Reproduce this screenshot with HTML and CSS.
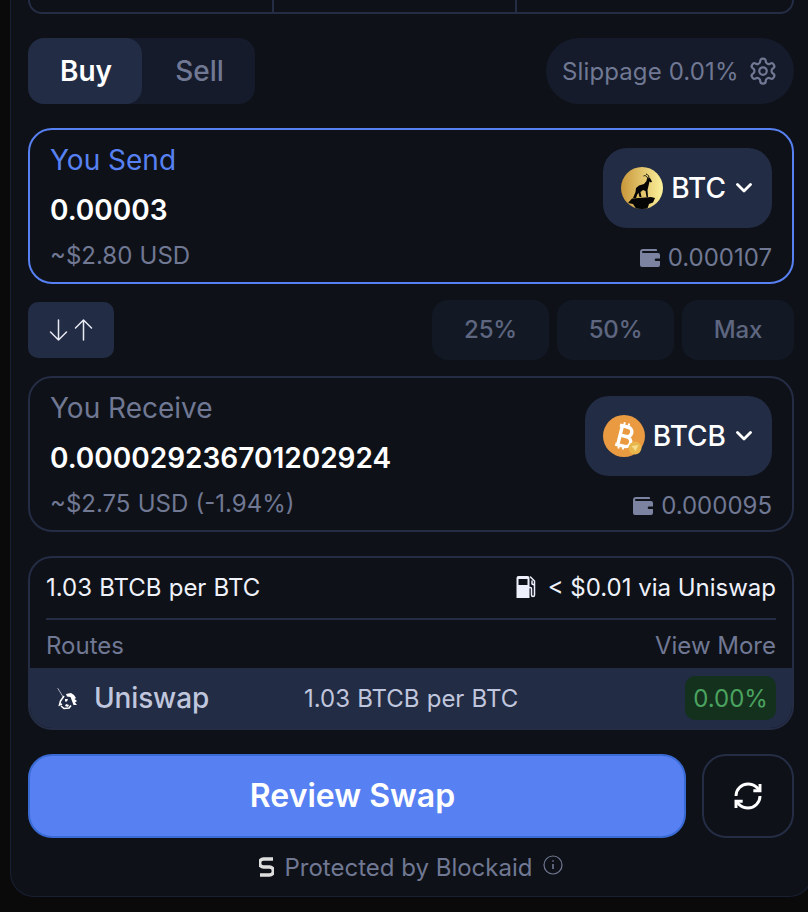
FILE: index.html
```html
<!DOCTYPE html>
<html lang="en">
<head>
    <meta charset="UTF-8">
    <meta name="viewport" content="width=device-width, initial-scale=1.0">
    <title>Swap</title>
    <link rel="stylesheet" href="styles.css">
</head>
<body>
    <div class="panel">
        <!-- stats card, scrolled mostly out of view -->
        <div class="stats">
            <div class="stat"></div>
            <div class="stat"></div>
            <div class="stat"></div>
        </div>

        <div class="top-row">
            <div class="tabs">
                <div class="tab active">Buy</div>
                <div class="tab">Sell</div>
            </div>
            <div class="slippage">
                <span>Slippage 0.01%</span>
                <svg class="gear" viewBox="0 0 24 24" fill="none" stroke="currentColor" stroke-width="1.800" stroke-linecap="round" stroke-linejoin="round">
                    <path d="M12.22 2h-.44a2 2 0 0 0-2 2v.18a2 2 0 0 1-1 1.73l-.43.25a2 2 0 0 1-2 0l-.15-.08a2 2 0 0 0-2.73.73l-.22.38a2 2 0 0 0 .73 2.73l.15.1a2 2 0 0 1 1 1.72v.51a2 2 0 0 1-1 1.74l-.15.09a2 2 0 0 0-.73 2.73l.22.38a2 2 0 0 0 2.73.73l.15-.08a2 2 0 0 1 2 0l.43.25a2 2 0 0 1 1 1.73V20a2 2 0 0 0 2 2h.44a2 2 0 0 0 2-2v-.18a2 2 0 0 1 1-1.73l.43-.25a2 2 0 0 1 2 0l.15.08a2 2 0 0 0 2.73-.73l.22-.39a2 2 0 0 0-.73-2.73l-.15-.08a2 2 0 0 1-1-1.74v-.5a2 2 0 0 1 1-1.74l.15-.09a2 2 0 0 0 .73-2.73l-.22-.38a2 2 0 0 0-2.73-.73l-.15.08a2 2 0 0 1-2 0l-.43-.25a2 2 0 0 1-1-1.73V4a2 2 0 0 0-2-2z"/>
                    <circle cx="12" cy="12" r="3"/>
                </svg>
            </div>
        </div>

        <div class="token-card focused">
            <div class="token-left">
                <div class="token-label">You Send</div>
                <div class="token-amount">0.00003</div>
                <div class="token-usd">~$2.80 USD</div>
            </div>
            <div class="token-right">
                <div class="picker">
                    <svg class="coin" viewBox="0 0 42 42">
                        <defs>
                            <linearGradient id="gold" x1="0" y1="0" x2="1" y2="0">
                                <stop offset="0" stop-color="#c9963a"/>
                                <stop offset="1" stop-color="#fbf29c"/>
                            </linearGradient>
                            <clipPath id="round"><circle cx="21" cy="21" r="21"/></clipPath>
                        </defs>
                        <circle cx="21" cy="21" r="21" fill="url(#gold)"/>
                        <g clip-path="url(#round)" fill="#050505">
                            <path d="M12 31L14.500 25L15 21L18 18.500L23 17L25.500 14L26 11.500L29 11L31 14.500L30 15.500L28.500 14.500L27.500 19L26.500 23L27 30L25.500 30L24.500 24L22 23L19.500 25L20.500 30L18.500 30L17.500 26L16.500 27L15 31Z"/>
                            <path d="M7 36L11 31.500L30 30L34 31L32 35.500L28 37L26 43L16 43L12 37Z"/>
                            <path d="M27 12C26 9 24 8 22.500 9M28 11.500C28 9 27 7.500 25 7" fill="none" stroke="#050505"/>
                        </g>
                    </svg>
                    <span class="picker-name">BTC</span>
                    <svg class="chevron" viewBox="0 0 16 16" fill="none" stroke="currentColor" stroke-width="2.800" stroke-linecap="round" stroke-linejoin="round"><path d="M1.500 4.500L8 11l6.500-6.500"/></svg>
                </div>
                <div class="balance">
                    <svg class="wallet" viewBox="0 0 20 18"><path d="M3 0h13a1 1 0 0 1 1 1v1H3a1 1 0 0 0 0 2h15a2 2 0 0 1 2 2v10a2 2 0 0 1-2 2H2a2 2 0 0 1-2-2V3a3 3 0 0 1 3-3zm13 9.500a1.300 1.300 0 1 0 0 2.600h4V9.500z"/></svg>
                    <span>0.000107</span>
                </div>
            </div>
        </div>

        <div class="mid-row">
            <div class="flip">
                <svg class="flip-icon" viewBox="0 0 44 24" fill="none" stroke="currentColor" stroke-width="1.500" stroke-linecap="round" stroke-linejoin="round">
                    <path d="M9.500 2v20M1.500 14l8 8 8-8"/>
                    <path d="M34.500 22V2M26.500 10l8-8 8 8"/>
                </svg>
            </div>
            <div class="amounts">
                <div class="amount amount-pct">25%</div>
                <div class="amount amount-pct">50%</div>
                <div class="amount amount-max">Max</div>
            </div>
        </div>

        <div class="token-card">
            <div class="token-left">
                <div class="token-label muted">You Receive</div>
                <div class="token-amount">0.000029236701202924</div>
                <div class="token-usd">~$2.75 USD (-1.94%)</div>
            </div>
            <div class="token-right">
                <div class="picker">
                    <svg class="coin" viewBox="0 0 42 42">
                        <circle cx="21" cy="21" r="21" fill="#ea9a40"/>
                        <g transform="rotate(14 21 21)" fill="none" stroke="#fff">
                            <path stroke-width="3.400" d="M14.500 11.500H23a4.500 4.500 0 0 1 0 9.500H16.500M16.500 21H24a5 5 0 0 1 0 10H14.500M17 11.500V31"/>
                            <path stroke-width="2" d="M18.500 7.500V11M23 7.500V11M18.500 31V34.500M23 31V34.500"/>
                        </g>
                        <circle cx="32" cy="33" r="6.500" fill="#e9b64c"/>
                        <path d="M28.500 31l7-1-3 6z" fill="#f5dd8c"/>
                    </svg>
                    <span class="picker-name">BTCB</span>
                    <svg class="chevron" viewBox="0 0 16 16" fill="none" stroke="currentColor" stroke-width="2.800" stroke-linecap="round" stroke-linejoin="round"><path d="M1.500 4.500L8 11l6.500-6.500"/></svg>
                </div>
                <div class="balance">
                    <svg class="wallet" viewBox="0 0 20 18"><path d="M3 0h13a1 1 0 0 1 1 1v1H3a1 1 0 0 0 0 2h15a2 2 0 0 1 2 2v10a2 2 0 0 1-2 2H2a2 2 0 0 1-2-2V3a3 3 0 0 1 3-3zm13 9.500a1.300 1.300 0 1 0 0 2.600h4V9.500z"/></svg>
                    <span>0.000095</span>
                </div>
            </div>
        </div>

        <div class="quote">
            <div class="quote-head">
                <div class="quote-row">
                    <span class="rate-text">1.03 BTCB per BTC</span>
                    <span class="gas">
                        <svg class="gas-icon" viewBox="0 0 20 22">
                            <path fill="#eef0fb" fill-rule="evenodd" d="M2 0h9a2 2 0 0 1 2 2v20H0V2a2 2 0 0 1 2-2zm0 3v6h9V3z"/>
                            <path fill="none" stroke="#eef0fb" stroke-width="1.500" stroke-linecap="round" stroke-linejoin="round" d="M14 1l4 4v14a1.500 1.500 0 0 1-3 0v-6a1.500 1.500 0 0 0-2-1.500M15.500 5v3l2.500 1"/>
                        </svg>
                        <span>&lt; $0.01 via Uniswap</span>
                    </span>
                </div>
                <div class="routes-row">
                    <span>Routes</span>
                    <span>View More</span>
                </div>
            </div>
            <div class="route">
                <div class="route-name">
                    <svg class="uni" viewBox="0 0 23 27">
                        <path d="M1.700 3.200L7.300 12.200" stroke="#cfd3e3" stroke-width="0.800" fill="none"/>
                        <path fill="#fff" d="M10 9L15 8L18 10L20 13L18.500 14L21 16L19 17.500L21 20L17.500 20L16 16L14.500 12L11 11.500Z"/>
                        <path fill="none" stroke="#fff" stroke-width="1.600" d="M8 11L4.500 16L3.500 20L6 19M5 21L8 23.500L13 23L15 20.500"/>
                        <path fill="#fff" d="M9 14h3l-1 2.500h-2zM10 19l3 1-1 2-3-1z"/>
                    </svg>
                    <span>Uniswap</span>
                </div>
                <div class="route-rate rate-text">1.03 BTCB per BTC</div>
                <div class="route-pct">0.00%</div>
            </div>
        </div>

        <div class="actions">
            <button class="review">Review Swap</button>
            <button class="refresh">
                <svg viewBox="0 0 24 24" fill="none" stroke="currentColor" stroke-width="2.200" stroke-linecap="butt" stroke-linejoin="miter">
                    <path d="M3 12a9 9 0 0 1 9-9 9.750 9.750 0 0 1 6.740 2.740L21 8"/>
                    <path d="M21 3v5h-5"/>
                    <path d="M21 12a9 9 0 0 1-9 9 9.750 9.750 0 0 1-6.740-2.740L3 16"/>
                    <path d="M8 16H3v5"/>
                </svg>
            </button>
        </div>

        <div class="protected">
            <svg class="blockaid" viewBox="0 0 15 20" fill="none" stroke="#dedede" stroke-width="3.600"><path d="M14 2H4.500a4 4 0 0 0 0 8h6a4 4 0 0 1 0 8H1"/></svg>
            <span>Protected by Blockaid</span>
            <svg class="info" viewBox="0 0 20 20" fill="none" stroke="currentColor" stroke-width="1.200"><circle cx="10" cy="10" r="9"/><path d="M10 9v5" stroke-width="1.600"/><circle cx="10" cy="6" r="0.500" stroke-width="1"/></svg>
        </div>
    </div>
</body>
</html>
```

FILE: styles.css
```css
* {
    box-sizing: border-box;
}

html, body {
    height: 100%;
}

body {
    margin: 0;
    background-color: #0a0a0b;
    font-family: Inter, "Liberation Sans", sans-serif;
    color: #fff;
    overflow: hidden;
}

.panel {
    width: 803px;
    height: 897px;
    margin-left: 10px;
    padding: 0 0 0 18px;
    background-color: #0e1118;
    border: 1px solid #1a2033;
    border-top: 0;
    border-radius: 0 0 24px 24px;
    display: flex;
    flex-direction: column;
}

.stats {
    display: grid;
    grid-template-columns: 244px 243px 1fr;
    height: 14px;
    width: 766px;
    margin-left: -1px;
    flex-shrink: 0;
    border: 2px solid #252d45;
    border-top: 0;
    border-radius: 0 0 24px 24px;
}

.stat {
    border-right: 2px solid #252d45;
}

.stat:last-child {
    border-right: 0;
}

.top-row {
    display: flex;
    justify-content: space-between;
    width: 766px;
    margin: 24px 0 24px -1px;
}

.tabs {
    display: flex;
    width: 227px;
    height: 66px;
    background-color: #151b2a;
    border-radius: 16px;
}

.tab {
    width: 113px;
    padding-left: 2px;
    display: flex;
    align-items: center;
    justify-content: center;
    font-size: 28px;
    font-weight: 500;
    color: #707893;
    border-radius: 16px;
}

.tab.active {
    width: 114px;
    background-color: #222c44;
    color: #fff;
    font-weight: 600;
}

.slippage {
    width: 248px;
    height: 66px;
    padding: 0 16px;
    display: flex;
    align-items: center;
    justify-content: space-between;
    background-color: #151b2a;
    border-radius: 33px;
    font-size: 24px;
    letter-spacing: 0.12px;
    color: #707893;
}

.gear {
    width: 30px;
    height: 30px;
}

.token-card {
    width: 766px;
    height: 156px;
    margin-left: -1px;
    padding: 0 20px;
    border: 2px solid #252d45;
    border-radius: 24px;
    display: flex;
    justify-content: space-between;
    flex-shrink: 0;
}

.token-card.focused {
    border-color: #5781f2;
}

.token-left {
    padding-top: 12px;
}

.token-label {
    font-size: 28px;
    line-height: 36px;
    color: #5781f2;
}

.token-label.muted {
    color: #707893;
}

.token-amount {
    margin-top: 14px;
    font-size: 28px;
    font-weight: 600;
    line-height: 36px;
}

.token-usd {
    margin-top: 10px;
    font-size: 24px;
    line-height: 36px;
    word-spacing: 0.5px;
    color: #707893;
}

.token-right {
    padding-top: 18px;
    display: flex;
    flex-direction: column;
    align-items: flex-end;
}

.picker {
    height: 80px;
    padding: 0 20px 0 18px;
    display: flex;
    align-items: center;
    background-color: #222c44;
    border-radius: 24px;
}

.coin {
    width: 42px;
    height: 42px;
}

.picker-name {
    margin-left: 8px;
    font-size: 28px;
    font-weight: 500;
}

.chevron {
    width: 16px;
    height: 16px;
    margin-left: 10px;
}

.balance {
    margin-top: 12px;
    display: flex;
    align-items: center;
    gap: 8px;
    font-size: 24px;
    line-height: 36px;
    color: #707893;
}

.wallet {
    width: 20px;
    height: 18px;
    fill: #7c83a1;
}

.mid-row {
    width: 766px;
    margin: 16px 0 16px -1px;
    display: flex;
    justify-content: space-between;
    align-items: center;
}

.flip {
    width: 86px;
    height: 56px;
    display: flex;
    align-items: center;
    justify-content: center;
    background-color: #222c44;
    border-radius: 10px;
}

.flip-icon {
    width: 44px;
    height: 24px;
    color: #e9ebf4;
}

.amounts {
    display: flex;
    gap: 8px;
}

.amount {
    height: 60px;
    padding-bottom: 1px;
    display: flex;
    align-items: center;
    justify-content: center;
    background-color: #121924;
    border-radius: 16px;
    font-size: 24px;
    font-weight: 500;
    letter-spacing: -0.2px;
    color: #5e6680;
}

.amount-pct {
    width: 117px;
}

.amount-max {
    width: 112px;
}

.quote {
    width: 766px;
    margin: 24px 0 24px -1px;
    border: 2px solid #252d45;
    border-radius: 24px;
    overflow: hidden;
    flex-shrink: 0;
}

.quote-head {
    padding: 0 16px;
}

.quote-row {
    height: 62px;
    padding-bottom: 2px;
    display: flex;
    justify-content: space-between;
    align-items: center;
    font-size: 24px;
    color: #f0f2fb;
    border-bottom: 2px solid #252d45;
}

.rate-text {
    word-spacing: 0.4px;
}

.gas {
    display: flex;
    align-items: center;
    gap: 11px;
}

.gas-icon {
    width: 21px;
    height: 22px;
}

.routes-row {
    height: 48px;
    padding-top: 2px;
    display: flex;
    justify-content: space-between;
    align-items: center;
    font-size: 24px;
    color: #707893;
}

.route {
    height: 60px;
    padding: 0 16px 0 26px;
    display: flex;
    align-items: center;
    background-color: #222c44;
    color: #c0c6dd;
}

.route-name {
    width: 248px;
    display: flex;
    align-items: center;
    gap: 15px;
    font-size: 28px;
    font-weight: 500;
    letter-spacing: -0.15px;
}

.uni {
    width: 23px;
    height: 27px;
}

.route-rate {
    font-size: 24px;
}

.route-pct {
    margin-left: auto;
    width: 91px;
    height: 44px;
    display: flex;
    align-items: center;
    justify-content: center;
    background-color: #14311d;
    border-radius: 10px;
    font-size: 24px;
    color: #4ba360;
}

.actions {
    width: 766px;
    margin-left: -1px;
    display: flex;
    gap: 16px;
}

.review {
    flex: 1;
    height: 84px;
    padding: 0 9px 2px 0;
    background-color: #5781f2;
    border: 2px solid #3a6bd4;
    border-radius: 24px;
    font-family: inherit;
    font-size: 32px;
    font-weight: 600;
    color: #fff;
}

.refresh {
    width: 92px;
    height: 84px;
    padding: 0;
    background-color: transparent;
    border: 2px solid #252d45;
    border-radius: 24px;
    color: #fff;
    display: flex;
    align-items: center;
    justify-content: center;
}

.refresh svg {
    width: 32px;
    height: 32px;
}

.protected {
    width: 766px;
    height: 58px;
    margin-left: -1px;
    display: flex;
    align-items: center;
    justify-content: center;
    font-size: 24px;
    color: #707893;
}

.blockaid {
    width: 15px;
    height: 20px;
    margin-right: 11px;
}

.info {
    width: 20px;
    height: 20px;
    margin: -4px 0 0 11px;
}
```
